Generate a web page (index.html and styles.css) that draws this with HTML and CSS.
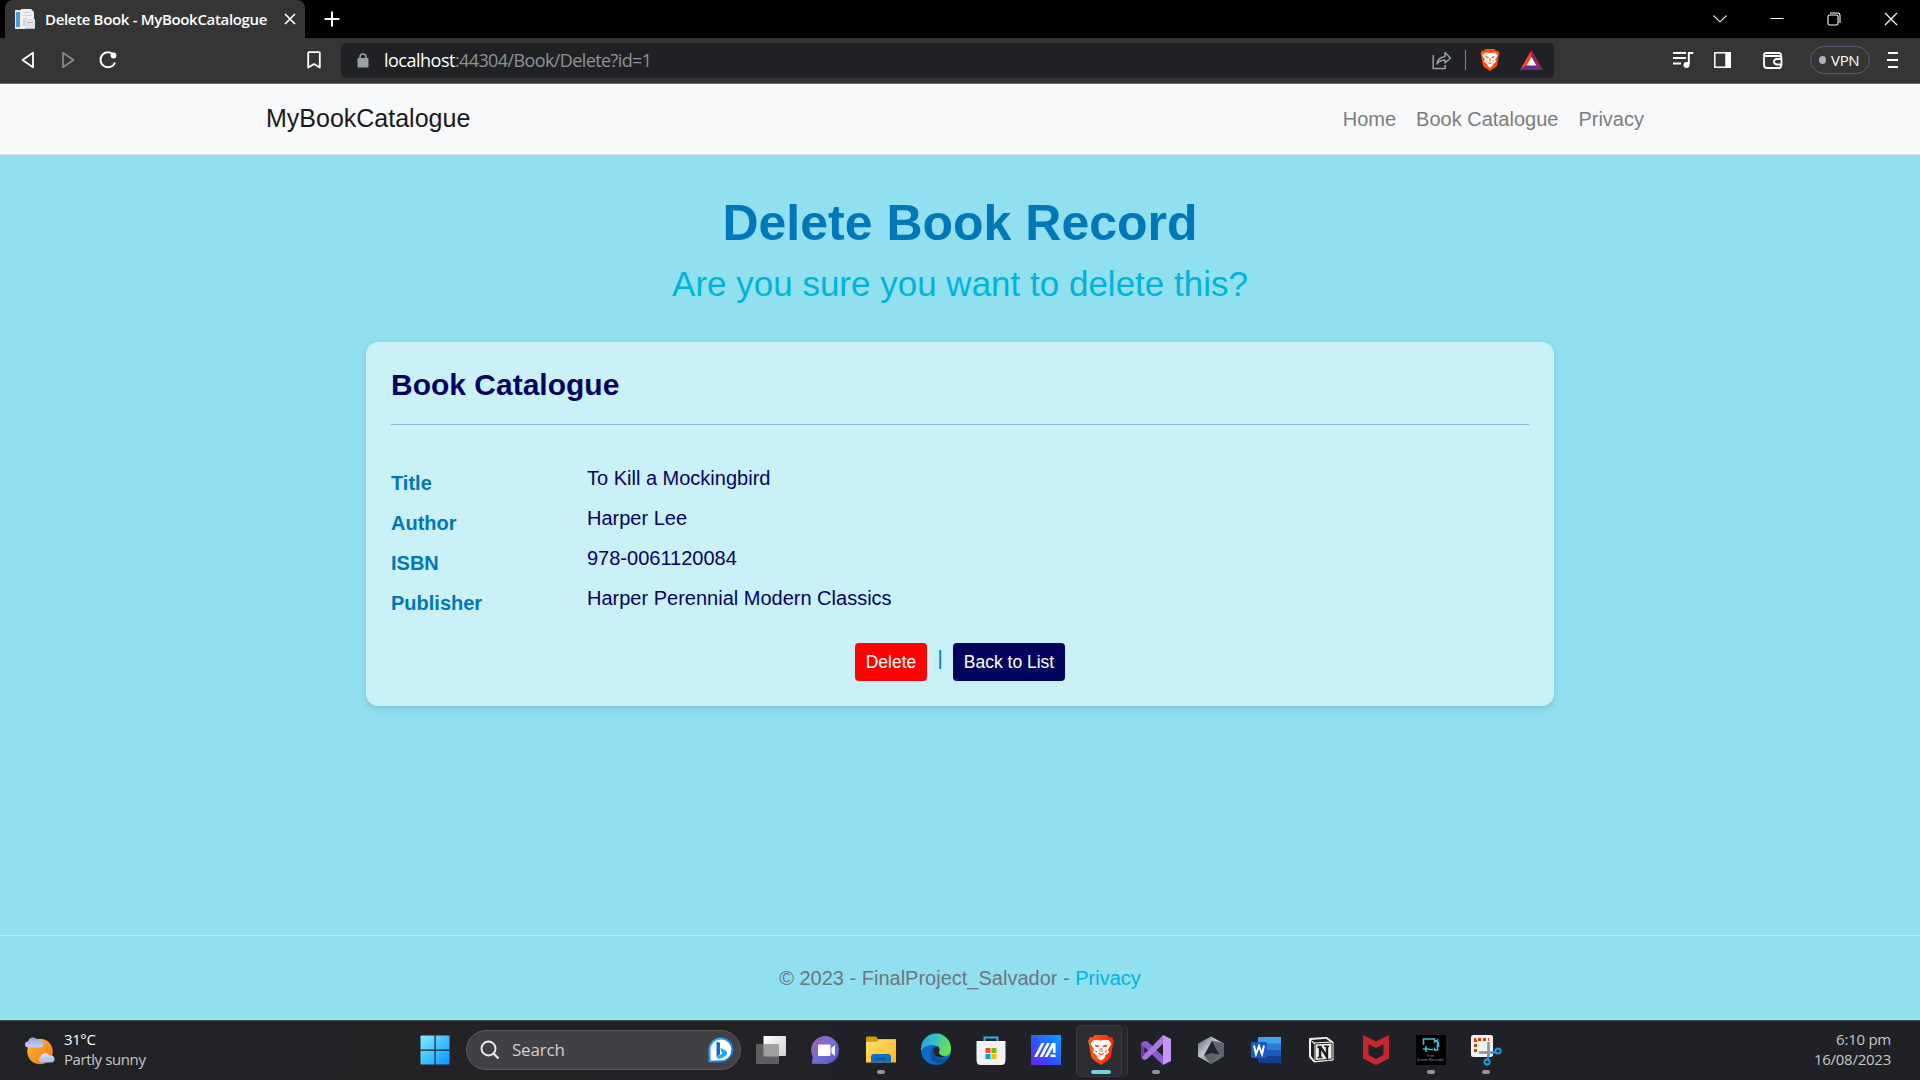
FILE: index.html
```html
<!DOCTYPE html>
<html lang="en">
<head>
<meta charset="utf-8">
<title>Delete Book - MyBookCatalogue</title>
<link rel="stylesheet" href="styles.css">
</head>
<body>
<svg class="defs" width="0" height="0" aria-hidden="true">
  <defs>
    <linearGradient id="gWin" x1="0" y1="0" x2="1" y2="1"><stop offset="0" stop-color="#7df0ff"/><stop offset="1" stop-color="#0a93ff"/></linearGradient>
    <linearGradient id="gSun" x1="0" y1="0" x2="1" y2="1"><stop offset="0" stop-color="#f8bd2c"/><stop offset="1" stop-color="#f2701b"/></linearGradient>
    <linearGradient id="gCloud" x1="0" y1="0" x2="0" y2="1"><stop offset="0" stop-color="#8fa6e2"/><stop offset=".6" stop-color="#dce6fb"/><stop offset="1" stop-color="#a9bcec"/></linearGradient>
    <linearGradient id="gChat" x1="0" y1="0" x2="1" y2="1"><stop offset="0" stop-color="#a25fb0"/><stop offset=".5" stop-color="#7170d2"/><stop offset="1" stop-color="#4f55c8"/></linearGradient>
    <linearGradient id="gFold" x1="0" y1="0" x2="1" y2="1"><stop offset="0" stop-color="#ffe06e"/><stop offset="1" stop-color="#fbb820"/></linearGradient>
    <linearGradient id="gEdge" x1="0" y1="0" x2="1" y2=".3"><stop offset="0" stop-color="#1c9de0"/><stop offset=".5" stop-color="#35c1c9"/><stop offset="1" stop-color="#6be04d"/></linearGradient>
    <linearGradient id="gMa" x1="1" y1="0" x2="0" y2="1"><stop offset="0" stop-color="#00a6ff"/><stop offset=".5" stop-color="#2a5cff"/><stop offset="1" stop-color="#6a1aff"/></linearGradient>
    <linearGradient id="gBrave" x1="0" y1="0" x2="1" y2="0"><stop offset="0" stop-color="#ff5a1c"/><stop offset="1" stop-color="#ff2500"/></linearGradient>
    <linearGradient id="gArm" x1="0" y1="0" x2="1" y2="1"><stop offset="0" stop-color="#535a61"/><stop offset=".4" stop-color="#c2c9ce"/><stop offset="1" stop-color="#343a40"/></linearGradient>
    <linearGradient id="gBing" x1="0" y1="0" x2="1" y2="1"><stop offset="0" stop-color="#2bc3f3"/><stop offset="1" stop-color="#1a56d8"/></linearGradient>
    <linearGradient id="gTask" x1="0" y1="0" x2="1" y2="1"><stop offset="0" stop-color="#fff"/><stop offset="1" stop-color="#d0d0d0"/></linearGradient>
    <symbol id="lion" viewBox="0 0 26 30">
      <path d="M7 0h12l2.500 2.500L24 2l2 4.500-1 3L23 21q-.6 2.500-3 4.300L13 30l-7-4.700Q3.600 23.500 3 21L1 9.500l-1-3L2 2l2.500.5z"/>
      <path fill="#fff" d="M5 5.500l4-.8 4 .8 4-.8 4 .8L23.500 9l-3.500 5.500 1.200 3L17.500 20l-1 3-3.500 2.500L9.500 23l-1-3-3.700-2.500 1.200-3L2.500 9z"/>
      <path d="M6.500 9.500l4.800 1.300-.6 1.400-3.200-.4zM19.500 9.500l-4.800 1.300.6 1.400 3.200-.4zM11.800 13h.8l-.3 4h-.9zM14.200 13h-.8l.3 4h.9zM10 17.800l3 1.200 3-1.200-.5 1.200-2.500 1.500-2.500-1.500zM7 15l2.500 1.800-1.500 1zM19 15l-2.500 1.800 1.500 1z"/>
    </symbol>
  </defs>
</svg>

<div class="tabstrip">
  <div class="tab">
    <svg class="favicon" width="20" height="20" viewBox="0 0 20 20"><path fill="#e9e9ec" d="M0 1h6v19H0z"/><path fill="#4d9ed6" d="M1 3h4v15H1z"/><path fill="#f1f1f3" d="M6 0h10l3 3v17H6z"/><path fill="#cfd2dc" d="M8 3h7v1H8zM8 6h9v1H8zM8 9h4v8H8z"/><path fill="#dfe3ea" d="M10 10h10v10H10z"/><path fill="#b4bac6" d="M12 13h6v1h-6zM10 19h10v1H10z"/></svg>
    <span class="tab-title">Delete Book - MyBookCatalogue</span>
    <svg class="tab-close" width="12" height="12" viewBox="0 0 12 12" fill="none" stroke="#fff" stroke-width="1.700"><path d="M1 1l10 10M11 1L1 11"/></svg>
  </div>
  <svg class="new-tab" width="16" height="16" viewBox="0 0 16 16" fill="none" stroke="#fff" stroke-width="2"><path d="M8 .5v15M.5 8h15"/></svg>
  <div class="window-buttons">
    <svg width="14" height="14" viewBox="0 0 14 14" fill="none" stroke="#d8d8d8" stroke-width="1.100"><path d="M.5 3.500L7 10 13.500 3.500"/></svg>
    <svg width="14" height="14" viewBox="0 0 14 14" fill="none" stroke="#fff"><path d="M.5 6.500h13"/></svg>
    <svg width="14" height="14" viewBox="0 0 14 14" fill="none" stroke="#fff" stroke-width="1.100"><rect x="1" y="3" width="10" height="10" rx="1.500"/><path d="M3 1h7.500Q13 1 13 3.500V11"/></svg>
    <svg width="14" height="14" viewBox="0 0 14 14" fill="none" stroke="#fff" stroke-width="1.200"><path d="M1 1l12 12M13 1L1 13"/></svg>
  </div>
</div>

<div class="toolbar">
  <div class="nav-buttons">
    <svg width="14" height="18" viewBox="0 0 14 18" fill="none" stroke="#fff" stroke-width="1.800" stroke-linejoin="round"><path d="M12 1.800v14.400L1.500 9z"/></svg>
    <svg width="14" height="18" viewBox="0 0 14 18" fill="none" stroke="#8c8c8c" stroke-width="1.700" stroke-linejoin="round"><path d="M2 1.800v14.400L12.500 9z"/></svg>
    <svg class="reload" width="20" height="20" viewBox="0 0 20 20" fill="none" stroke="#fff" stroke-width="1.900"><path d="M16.500 6A7.500 7.500 0 1 0 17 12.500"/><circle cx="15.500" cy="5.500" r="2.900" fill="#fff" stroke="none"/></svg>
  </div>
  <svg class="bookmark" width="14" height="18" viewBox="0 0 14 18" fill="none" stroke="#fff" stroke-width="1.800" stroke-linejoin="round"><path d="M1.200 2q0-.8.8-.8h10q.8 0 .8.800v14.500L7 13l-5.800 3.500z"/></svg>
  <div class="address">
    <svg width="12" height="15" viewBox="0 0 12 15"><rect x=".5" y="5" width="11" height="9.500" rx="1" fill="#9aa0a6"/><path d="M3 6V4a3 3 0 0 1 6 0v2" fill="none" stroke="#9aa0a6" stroke-width="1.500"/></svg>
    <span class="url"><b>localhost</b>:44304/Book/Delete?id=1</span>
    <svg class="share" width="20" height="20" viewBox="0 0 20 20" fill="none" stroke="#9a9da1" stroke-width="1.500"><path d="M1.200 5v13.500h12V15"/><path d="M5 14q.5-6.500 8-7.500V2.500l5.500 5.500-5.500 5v-3Q8 10 5 14z" stroke-linejoin="round"/></svg>
    <i class="address-rule"></i>
    <svg class="shield" width="20" height="22" fill="#fb4f0a"><use href="#lion"/></svg>
    <svg class="bat" width="23" height="20" viewBox="0 0 23 20"><path fill="#ff4724" d="M11.500 0v7L6.500 15.500 0 20z"/><path fill="#9e1f63" d="M11.500 0L23 20l-6.500-4.500-5-8.500z"/><path fill="#662d91" d="M0 20l6.500-4.500h10L23 20z"/><path fill="#fff" d="M11.500 7l5 8.500h-10z"/></svg>
  </div>
  <div class="tools">
    <svg width="21" height="18" viewBox="0 0 21 18" fill="none" stroke="#fff" stroke-width="1.900"><path d="M0 2h13M0 7h13M0 12.500h8M15.800 13V2h4.500"/><circle cx="13.500" cy="14" r="3" fill="#fff" stroke="none"/></svg>
    <svg width="17" height="18" viewBox="0 0 17 18" fill="none" stroke="#fff" stroke-width="1.500"><rect x=".8" y="1.800" width="15.400" height="14.400"/><path fill="#fff" d="M12 2h4v14h-4z"/></svg>
    <svg width="20" height="18" viewBox="0 0 20 18" fill="none" stroke="#fff" stroke-width="1.800"><path d="M18 6V4q0-2-2-2H3Q1 2 1 4v10q0 3 3 3h12q2 0 2-2v-1M1.500 5H16q2.500 0 2.500 2v6.500H14q-3-.2-3-2.700 0-2.800 3-2.800h5"/></svg>
    <span class="vpn"><i></i>VPN</span>
    <svg width="12" height="18" viewBox="0 0 12 18" stroke="#fff" stroke-width="2"><path d="M1 2h10M0 9h11M1 16h10"/></svg>
  </div>
</div>

<header class="navbar">
  <span class="brand">MyBookCatalogue</span>
  <nav><a>Home</a><a>Book Catalogue</a><a>Privacy</a></nav>
</header>

<main>
  <h1>Delete Book Record</h1>
  <h3>Are you sure you want to delete this?</h3>
  <section class="card">
    <h4>Book Catalogue</h4>
    <hr>
    <dl>
      <dt>Title</dt><dd>To Kill a Mockingbird</dd>
      <dt>Author</dt><dd>Harper Lee</dd>
      <dt>ISBN</dt><dd>978-0061120084</dd>
      <dt>Publisher</dt><dd>Harper Perennial Modern Classics</dd>
    </dl>
    <div class="actions"><span class="btn delete">Delete</span><span class="sep">|</span><span class="btn back">Back to List</span></div>
  </section>
</main>
<footer>© 2023 - FinalProject_Salvador - <a>Privacy</a></footer>

<div class="taskbar">
  <div class="weather">
    <svg width="30" height="30" viewBox="0 0 30 30"><circle cx="15" cy="15.500" r="12.800" fill="url(#gSun)"/><path fill="url(#gCloud)" d="M3 11.500a3 3 0 0 1 0-6 5 5 0 0 1 9.500-1 4 4 0 0 1 4 7zM15.500 26.500a3 3 0 0 1 0-5.500 5 5 0 0 1 9-1.500 3.700 3.700 0 0 1 2.500 7z"/></svg>
    <div class="forecast"><p class="temp">31°C</p><p>Partly sunny</p></div>
  </div>
  <svg class="start" width="30" height="30" viewBox="0 0 30 30" fill="url(#gWin)"><path d="M1 .5h13.500v14H.5V1zM15.700.5H29q.5 0 .5.500v13.500H15.700zM.5 15.700h14v13.800H1q-.5 0-.5-.5zM15.700 15.700h13.800V29q0 .5-.5.500H15.700z"/></svg>
  <div class="search">
    <svg width="20" height="20" viewBox="0 0 20 20" fill="none" stroke="#eee" stroke-width="1.900"><circle cx="8.500" cy="8.500" r="7"/><path d="M13.500 13.500l5 5" stroke-width="2.300"/></svg>
    <span>Search</span>
    <svg class="bing" width="26" height="26" viewBox="0 0 26 26"><path d="M1.500 24.500V13A11.500 11.500 0 1 1 13 24.500z" fill="#fff" stroke="url(#gBing)" stroke-width="2"/><path fill="#1666d8" d="M8.500 4.500l3.500 1.200v11.500l-3.500 3z"/><path fill="#29a9e8" d="M8.500 20.200l5.500-3.700-1.800-5.700L18.500 14q1.800 3-1 5L13 21.500q-3 1-4.500-1.300z"/></svg>
  </div>
  <div class="apps">
    <div class="app"><svg width="30" height="30" viewBox="0 0 30 30"><path fill="url(#gTask)" d="M7.500 1H29q1 0 1 1v18q0 1-1 1H7.500z"/><rect y="9" width="23" height="20" rx="1" fill="#5e5e5e"/><path fill="#a0a0a0" d="M7.500 9H23v12.500H7.500z"/></svg></div>
    <div class="app"><svg width="30" height="30" viewBox="0 0 30 30"><path fill="url(#gChat)" d="M.8 28.800l1-7A14 14 0 1 1 15 29z"/><rect x="7" y="9.500" width="12.500" height="11.500" rx="1" fill="#fff"/><path fill="#fff" d="M20.500 13l3.500-3v11l-3.500-3z"/></svg></div>
    <div class="app open"><svg width="30" height="30" viewBox="0 0 30 30"><path fill="#d9980b" d="M0 3q0-1.500 1.500-1.500H10l2 2.500h18v5H0z"/><path fill="url(#gFold)" d="M0 7l11-.3 2-2.200h17v23H0z"/><path fill="#0c70c4" d="M5 27.500V22q0-3 3-3h14q3 0 3 3v5.500z"/><path fill="#0a4f96" d="M9 23h11v1.500H9z"/></svg></div>
    <div class="app"><svg width="30" height="30" viewBox="0 0 30 30"><circle cx="15" cy="15" r="15" fill="#0b6ccb"/><path fill="url(#gEdge)" d="M0 13A15 15 0 0 1 30 14q0 6.500-6 7-6 0-6-3 2-7-5-8Q4 9 0 16z"/><path fill="#0c4f9e" d="M10 15q-3 12 8 13.500 6-.5 9.500-5.500-12 4-15-6 .5-5 4.500-4-5-3-7 2z"/><path fill="#1f2126" d="M12.500 15q.5-4 4.500-3.500 2.500 2.500.8 6 1 3.500 6 4-6 2.500-10-1.500-1.500-2-1.300-5z"/></svg></div>
    <div class="app"><svg width="30" height="30" viewBox="0 0 30 30"><path fill="none" stroke="#2fb4e8" stroke-width="2" d="M8.500 8V2.500h13V8"/><path fill="#f3f3f3" d="M.5 6h29v19q0 5-4 5h-21q-4 0-4-5z"/><path fill="#f25022" d="M9.500 13h5v5h-5z"/><path fill="#7fba00" d="M15.500 13h5v5h-5z"/><path fill="#00a4ef" d="M9.500 19h5v5h-5z"/><path fill="#ffb900" d="M15.500 19h5v5h-5z"/></svg></div>
    <div class="app"><svg width="30" height="30" viewBox="0 0 30 30"><path fill="url(#gMa)" d="M0 0h30v30H0z"/><path fill="#fff" d="M3 22L10.500 8h3L6 22zM8.500 22L16 8h3l-7.500 14zM13.500 22L21 8h3.500v10H22v-5.500L16.500 22zM19.500 19.500h5V22h-5z"/></svg></div>
    <div class="app active"><svg width="26" height="30" fill="url(#gBrave)"><use href="#lion"/></svg></div>
    <div class="app open"><svg width="30" height="30" viewBox="0 0 30 30"><path fill="#6b3fa8" d="M0 8l3-2 3 2v15l-3 2-3-2z"/><path fill="#8a5bc9" d="M2 6.500l4-.5 18 17-2 7L0 9z"/><path fill="#a678e0" d="M22 0L1 22l2 3 3-1L24 7z"/><path fill="#c795f5" d="M22 0l8 4v22l-8 4z"/><path fill="#1f2126" d="M22 10v10l-6-5zM3.500 12v6l3-3z"/></svg></div>
    <div class="app"><svg width="28" height="30" viewBox="0 0 28 30"><path fill="url(#gArm)" d="M14 1.500l13 7v13l-13 7.500-13-7.500v-13z"/><path fill="#22262a" d="M15 5.500l7.500 14L7 20.500z"/><path fill="#5d656b" d="M15 5.500l7.500 14 4.500 1v-12zM7 20.500L14 29l8.500-9.500-8-1.500z"/></svg></div>
    <div class="app"><svg width="30" height="30" viewBox="0 0 30 30"><path fill="#41a5ee" d="M8 2h22v7H7V3z"/><path fill="#2b7cd3" d="M7 8.500h23V15H7z"/><path fill="#185abd" d="M7 15h23v6.500H7z"/><path fill="#103f91" d="M7 21.500h23V28H8q-1 0-1-1z"/><rect y="7" width="16" height="16" rx="1" fill="#185abd"/><path fill="none" stroke="#fff" stroke-width="2" d="M3 10.500l2 8.500 3-8 3 8 2-8.500"/></svg></div>
    <div class="app"><svg width="26" height="30" viewBox="0 0 26 30"><path fill="#f4f4f2" stroke="#f4f4f2" stroke-linejoin="round" d="M1.500 3.500L19 2.500l6 4.500v18l-19 2-4.500-5z"/><path fill="#1d1d1f" d="M3 5l15-1.200 4 2.700-15.500 1zM6 9v16l-3-4V6z"/><path fill="#f4f4f2" stroke="#1d1d1f" d="M7 9l17-1v16L7 25.500z"/><path fill="none" stroke="#1d1d1f" stroke-width="2.400" d="M9.500 12h3l6.500 10V11M12 12v10"/><path stroke="#1d1d1f" stroke-width="1.500" d="M9.500 22.500h5M16 11.300h5"/></svg></div>
    <div class="app"><svg width="28" height="30" viewBox="0 0 28 30"><path fill="#c7282d" d="M1 0l13 6.500L27 0v23.500L14 30 1 23.500zM6.500 9v11L14 24l7.500-4V9L14 13z"/></svg></div>
    <div class="app open"><div class="recorder"><svg width="18" height="17" viewBox="0 0 18 17" fill="none" stroke="#42bcd0" stroke-width="1.600"><path d="M1.500 8V2h11v3l3-2v10h-3v-2.500M7 12.500h4M4 9v6M1 12h6M16.500 5v5"/></svg><small>Free</small><small>Screen Recorder</small></div></div>
    <div class="app open"><svg width="30" height="30" viewBox="0 0 30 30"><rect width="22" height="22" rx="2.500" fill="#f3f3f3"/><path fill="none" stroke="#d83b01" stroke-width="3" stroke-dasharray="3 2" d="M4.500 17V4.500H18"/><path fill="none" stroke="#8b9197" stroke-width="2.600" d="M17.500 7v14M8 17.500h15"/><circle cx="27" cy="16" r="2.600" fill="none" stroke="#189be8" stroke-width="2"/><circle cx="16" cy="27" r="2.600" fill="none" stroke="#189be8" stroke-width="2"/><path stroke="#189be8" stroke-width="2" d="M20 18l5-1M17 20v5"/></svg></div>
  </div>
  <div class="clock"><p>6:10 pm</p><p>16/08/2023</p></div>
</div>
</body>
</html>
```
FILE: styles.css
```css
* { box-sizing: border-box; margin: 0; padding: 0; }
body { width: 1920px; height: 1080px; overflow: hidden; display: flex; flex-direction: column; background: #90e0ef; font: 20px/30px "Liberation Sans", Arial, sans-serif; }
svg { display: block; flex: none; overflow: visible; }
.defs { height: 0; }
.tabstrip, .toolbar, .taskbar { font-family: "Open Sans", "Noto Sans", sans-serif; white-space: nowrap; flex: none; display: flex; align-items: center; }

.tabstrip { height: 38px; background: #000; padding-left: 5px; }
.tab { width: 300px; height: 38px; background: #353535; border-radius: 8px 8px 0 0; display: flex; align-items: center; padding: 0 9px 0 10px; }
.tab-title { color: #fff; font-size: 15px; font-weight: 600; line-height: 20px; margin: 0 0 1px 10px; flex: 1; letter-spacing: -.33px; }
.new-tab { margin-left: 19px; }
.window-buttons { margin-left: auto; margin-right: 22px; display: flex; gap: 43px; }

.toolbar { height: 46px; background: #353535; border-bottom: 1px solid #696969; padding-bottom: 1px; }
.nav-buttons { display: flex; align-items: center; gap: 26px; margin-left: 21px; width: 286px; }
.reload { margin-left: -3px; }
.bookmark { margin-right: 20px; }
.address { width: 1213px; height: 35px; border-radius: 5px; background: #202124; display: flex; align-items: center; padding: 0 11px 0 16px; }
.url { color: #8f9296; font-size: 18px; line-height: 24px; margin-left: 15px; flex: 1; letter-spacing: -.6px; }
.url b { color: #fff; font-weight: 400; letter-spacing: -.5px; }
.address-rule { width: 1px; height: 20px; background: #85878a; margin: 0 14px 0 13px; }
.bat { margin-left: 20px; }
.tools { margin-left: auto; margin-right: 21px; display: flex; align-items: center; }
.tools svg:nth-of-type(2) { margin-left: 20px; }
.tools svg:nth-of-type(3) { margin-left: 32px; }
.vpn { width: 60px; height: 28px; border: 1px solid #5b5b70; border-radius: 14px; color: #fff; font-size: 15px; line-height: 24px; display: flex; align-items: center; margin: 0 17px 0 27px; padding: 0 0 1px 8px; gap: 5px; letter-spacing: -.3px; }
.vpn i { width: 7px; height: 8px; border-radius: 50%; background: #b2b0c6; }

.navbar { flex: none; height: 71px; background: #f8f9fa; border-bottom: 1px solid #dee2e6; display: flex; justify-content: space-between; align-items: center; padding: 0 276px 0 266px; color: #7c7c7d; }
.brand { font-size: 25px; color: #1a1a1a; margin-bottom: 2px; }
nav { display: flex; gap: 20px; }

main { flex: 1; padding-top: 38px; text-align: center; }
h1 { font-size: 50px; line-height: 60px; color: #0077b6; margin-bottom: 10px; }
h3 { font-size: 35px; line-height: 42px; font-weight: 400; color: #00b4d8; margin-bottom: 37px; }
.card { width: 1188px; height: 364px; margin: 0 auto; padding: 25px; background: #caf0f8; border-radius: 12px; box-shadow: 0 3px 6px rgba(0, 0, 0, .12); text-align: left; }
h4 { font-size: 30px; line-height: 36px; color: #03045e; }
hr { border: 0; border-top: 1px solid #98b4d3; margin: 21px 0 38px; }
dl { display: grid; grid-template-columns: 196px 1fr; grid-auto-rows: 40px; color: #03045e; }
dt { font-weight: 700; color: #0077b6; padding-top: 5px; }
.actions { display: flex; justify-content: center; margin-top: 20px; color: #0077b6; }
.btn { height: 38px; border-radius: 4px; color: #fff; font-size: 17.5px; line-height: 38px; text-align: center; }
.delete { width: 72px; background: #f00; }
.back { width: 112px; background: #03045e; }
.sep { width: 26px; text-align: center; }
footer { flex: none; height: 85px; border-top: 1px solid #c5e5ee; text-align: center; color: #6c757d; line-height: 84px; }
footer a { color: #00b4d8; }

.taskbar { height: 60px; border-top: 1px solid #4a4d50; background: linear-gradient(90deg, #202226, #242125 18%, #252225 28%, #202127 45%, #202126); color: #c8c8c8; font-size: 15px; line-height: 20px; }
.weather { width: 419px; padding-left: 25px; display: flex; align-items: center; gap: 9px; letter-spacing: -.4px; }
.forecast { margin-bottom: 4px; }
.temp { color: #fff; }
.start { margin: 0 0 1px .5px; }
.search { width: 275px; height: 40px; margin: 0 0 1px 16.5px; border: 1px solid #5b5a5e; border-radius: 20px; background: #414044; display: flex; align-items: center; padding: 0 6px 0 13px; color: #d0d0d0; font-size: 17px; }
.search span { flex: 1; margin-left: 12px; letter-spacing: -.2px; }
.apps { display: flex; margin-left: 2px; }
.app { width: 55px; height: 59px; display: flex; align-items: center; justify-content: center; position: relative; padding-bottom: 1px; }
.open::after, .active::after { content: ""; position: absolute; bottom: 6px; width: 8px; height: 4px; border-radius: 2px; background: #94969a; }
.active::after { width: 20px; background: #76d3db; }
.active::before { content: ""; position: absolute; left: 3px; top: 4px; width: 44px; height: 50px; border: 1px solid #3a3b40; border-radius: 5px; background: #2c2d32; box-shadow: 5px 0 0 #26272b, 6px 0 0 #36373c; }
.active svg { position: relative; }
.recorder { width: 30px; height: 30px; background: #000; display: flex; flex-direction: column; align-items: center; padding-top: 2px; }
.recorder small { font-size: 3.500px; line-height: 4px; color: #aaa; letter-spacing: 0; }
.clock { margin: 0 29px 4px auto; text-align: right; letter-spacing: -.25px; }
```
